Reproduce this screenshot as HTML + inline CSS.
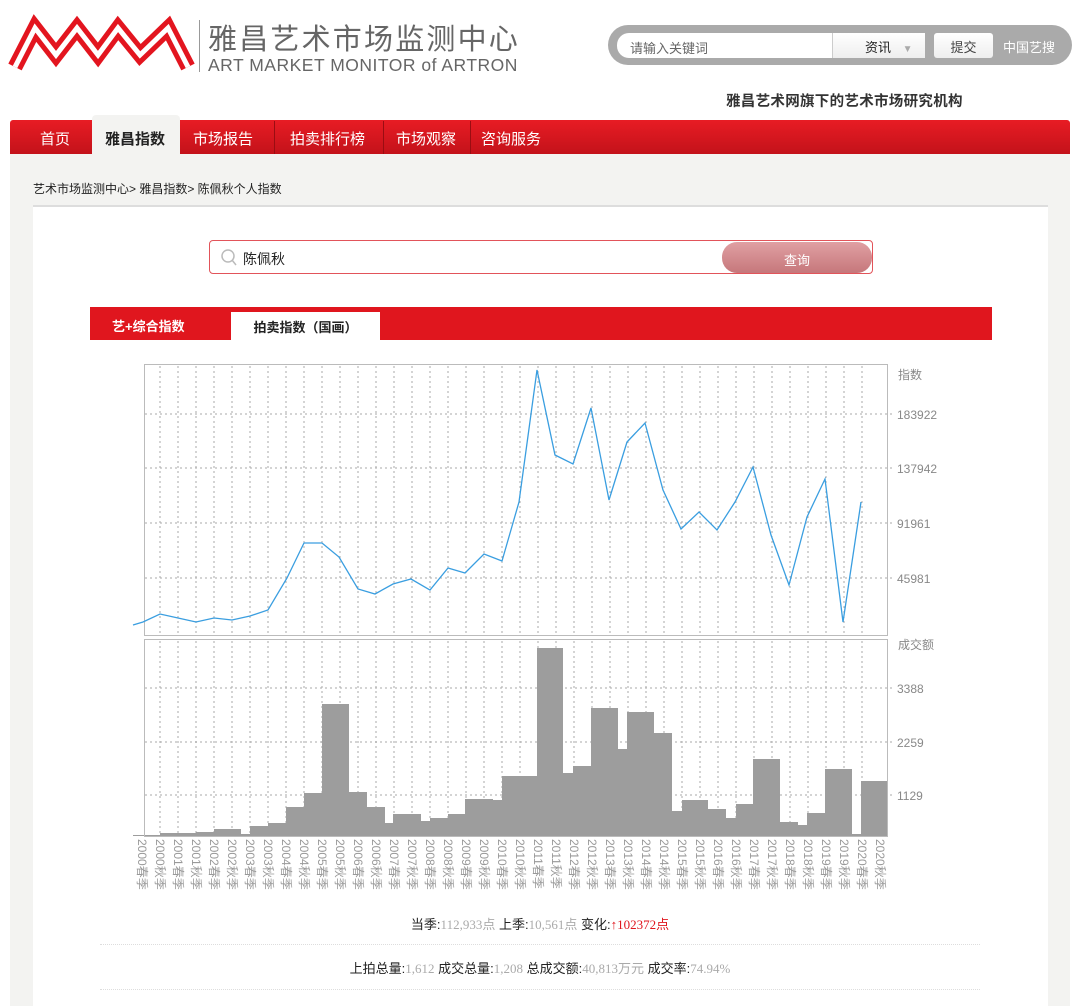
<!DOCTYPE html>
<html><head><meta charset="utf-8"><style>
*{margin:0;padding:0;box-sizing:border-box}
body{width:1080px;height:1006px;overflow:hidden;background:#fff;font-family:"Liberation Sans","Noto Sans CJK SC",sans-serif;position:relative}
.a{position:absolute}
.lb div{writing-mode:vertical-rl;text-orientation:sideways;width:18px}
</style></head><body>
<svg class="a" style="left:0;top:0" width="200" height="85">
<polyline points="15,67 35,28 56,55 77,28 98,55 118,28 140,55 168,28 188,67" fill="none" stroke="#e3151f" stroke-width="15" stroke-linejoin="miter"/>
<polyline points="15,67 35,28 56,55 77,28 98,55 118,28 140,55 168,28 188,67" fill="none" stroke="#fff" stroke-width="5" stroke-linejoin="miter"/>
</svg>
<div class="a" style="left:199px;top:20px;width:1px;height:52px;background:#999"></div>
<div class="a" style="left:208px;top:16px;font-size:29px;color:#666;letter-spacing:2.2px;white-space:nowrap">雅昌艺术市场监测中心</div>
<div class="a" style="left:208px;top:55px;font-size:17.5px;color:#666;white-space:nowrap;letter-spacing:0.5px">ART MARKET MONITOR of ARTRON</div>

<div class="a" style="left:608px;top:25px;width:464px;height:40px;border-radius:20px;background:#aaa"></div>
<div class="a" style="left:617px;top:33px;width:216px;height:25px;border-radius:12px 0 0 12px;background:#fff;font-size:13px;color:#666;padding:5px 0 0 13px">请输入关键词</div>
<div class="a" style="left:832px;top:33px;width:93px;height:25px;background:linear-gradient(#fff,#eee);border-left:1px solid #ccc;font-size:13px;color:#222;padding:4px 0 0 32px">资讯 <span style="color:#aaa;font-size:10px;margin-left:8px">▼</span></div>
<div class="a" style="left:934px;top:33px;width:59px;height:25px;background:linear-gradient(#fff,#eee);border-radius:3px;font-size:13px;color:#444;text-align:center;padding-top:4px">提交</div>
<div class="a" style="left:1003px;top:37px;font-size:13px;color:#fff">中国艺搜</div>
<div class="a" style="left:726px;top:90px;font-size:14.5px;color:#333;font-weight:bold;letter-spacing:0.3px">雅昌艺术网旗下的艺术市场研究机构</div>

<div class="a" style="left:10px;top:153px;width:1060px;height:853px;background:#f3f3f1"></div>
<div class="a" style="left:10px;top:120px;width:1060px;height:34px;background:linear-gradient(#e81c24,#c3121a);border-radius:3px 3px 0 0"></div>
<div class="a" style="left:92px;top:115px;width:88px;height:39px;background:#f3f3f1;border-radius:4px 4px 0 0"></div>
<div class="a" style="left:10px;top:128px;font-size:15px;color:#fff;white-space:nowrap">
<span class="a" style="left:30px">首页</span>
<span class="a" style="left:95px;color:#222;font-weight:bold">雅昌指数</span>
<span class="a" style="left:183px">市场报告</span>
<span class="a" style="left:280px">拍卖排行榜</span>
<span class="a" style="left:386px">市场观察</span>
<span class="a" style="left:471px">咨询服务</span>
</div>
<div class="a" style="left:274px;top:121px;width:1px;height:33px;background:#9a0d12"></div>
<div class="a" style="left:383px;top:121px;width:1px;height:33px;background:#9a0d12"></div>
<div class="a" style="left:470px;top:121px;width:1px;height:33px;background:#9a0d12"></div>

<div class="a" style="left:33px;top:180px;font-size:12px;color:#222">艺术市场监测中心&gt; 雅昌指数&gt; 陈佩秋个人指数</div>
<div class="a" style="left:33px;top:205px;width:1015px;height:801px;background:#fff;border-top:2px solid #ddd"></div>

<div class="a" style="left:209px;top:240px;width:664px;height:34px;border:1px solid #e2545a;border-radius:4px;background:#fff"></div>
<svg class="a" style="left:220px;top:248px" width="20" height="20"><circle cx="8" cy="8" r="6" fill="none" stroke="#bbb" stroke-width="1.5"/><line x1="12" y1="12" x2="16" y2="17" stroke="#bbb" stroke-width="1.5"/></svg>
<div class="a" style="left:243px;top:249px;font-size:14px;color:#222">陈佩秋</div>
<div class="a" style="left:722px;top:242px;width:150px;height:31px;border-radius:15px;background:linear-gradient(#e0a0a3,#c6777b);color:#fff;font-size:13px;text-align:center;padding-top:8px">查询</div>

<div class="a" style="left:90px;top:307px;width:902px;height:33px;background:#e0161e"></div>
<div class="a" style="left:112px;top:316px;font-size:13px;color:#fff;font-weight:bold">艺+综合指数</div>
<div class="a" style="left:231px;top:312px;width:149px;height:28px;background:#fff;font-size:13px;color:#222;font-weight:bold;text-align:center;padding-top:5px">拍卖指数（国画）</div>

<svg class="a" style="left:0;top:0" width="1080" height="1006">
<defs>
<g id="v">
<line x1="160" y1="0" x2="160" y2="268"/><line x1="178" y1="0" x2="178" y2="268"/><line x1="196" y1="0" x2="196" y2="268"/><line x1="214" y1="0" x2="214" y2="268"/><line x1="232" y1="0" x2="232" y2="268"/><line x1="250" y1="0" x2="250" y2="268"/><line x1="268" y1="0" x2="268" y2="268"/><line x1="286" y1="0" x2="286" y2="268"/><line x1="304" y1="0" x2="304" y2="268"/><line x1="322" y1="0" x2="322" y2="268"/><line x1="340" y1="0" x2="340" y2="268"/><line x1="358" y1="0" x2="358" y2="268"/><line x1="376" y1="0" x2="376" y2="268"/><line x1="394" y1="0" x2="394" y2="268"/><line x1="412" y1="0" x2="412" y2="268"/><line x1="430" y1="0" x2="430" y2="268"/><line x1="448" y1="0" x2="448" y2="268"/><line x1="466" y1="0" x2="466" y2="268"/><line x1="484" y1="0" x2="484" y2="268"/><line x1="502" y1="0" x2="502" y2="268"/><line x1="520" y1="0" x2="520" y2="268"/><line x1="538" y1="0" x2="538" y2="268"/><line x1="556" y1="0" x2="556" y2="268"/><line x1="574" y1="0" x2="574" y2="268"/><line x1="592" y1="0" x2="592" y2="268"/><line x1="610" y1="0" x2="610" y2="268"/><line x1="628" y1="0" x2="628" y2="268"/><line x1="646" y1="0" x2="646" y2="268"/><line x1="664" y1="0" x2="664" y2="268"/><line x1="682" y1="0" x2="682" y2="268"/><line x1="700" y1="0" x2="700" y2="268"/><line x1="718" y1="0" x2="718" y2="268"/><line x1="736" y1="0" x2="736" y2="268"/><line x1="754" y1="0" x2="754" y2="268"/><line x1="772" y1="0" x2="772" y2="268"/><line x1="790" y1="0" x2="790" y2="268"/><line x1="808" y1="0" x2="808" y2="268"/><line x1="826" y1="0" x2="826" y2="268"/><line x1="844" y1="0" x2="844" y2="268"/><line x1="862" y1="0" x2="862" y2="268"/>
</g>
<clipPath id="c"><rect x="140" y="641" width="760" height="194"/></clipPath>
</defs>
<g stroke="#aaa" stroke-width="1" stroke-dasharray="2,3" fill="none">
<use href="#v" transform="translate(0,366)"/>
<g clip-path="url(#c)"><use href="#v" transform="translate(0,641)"/></g>
<line x1="145" y1="414" x2="895" y2="414"/><line x1="145" y1="468" x2="895" y2="468"/><line x1="145" y1="523" x2="895" y2="523"/><line x1="145" y1="578" x2="895" y2="578"/>
<line x1="145" y1="688" x2="895" y2="688"/><line x1="145" y1="742" x2="895" y2="742"/><line x1="145" y1="795" x2="895" y2="795"/>
</g>
<path fill="#9d9d9d" d="M133,836 V835 H160 V833 H196 V832 H214 V829 H241 V834 H250 V826 H268 V823 H286 V807 H304 V793 H322 V704 H349 V792 H367 V807 H385 V823 H393 V814 H421 V821 H430 V818 H448 V814 H465 V799 H493 V800 H502 V776 H537 V648 H563 V773 H573 V766 H591 V708 H618 V749 H627 V712 H654 V733 H672 V811 H682 V800 H708 V809 H726 V818 H736 V804 H753 V759 H780 V822 H798 V825 H807 V813 H825 V769 H852 V834 H861 V781 H888 V836 Z"/>
<rect x="144.5" y="364.5" width="743" height="271" fill="none" stroke="#bbb"/>
<rect x="144.5" y="639.5" width="743" height="197" fill="none" stroke="#bbb"/>
<polyline fill="none" stroke="#3a9ee0" stroke-width="1.3" points="133,625 143,622 160,614 178,618 196,622 214,618 232,620 250,616 268,610 287,578 304,543 322,543 339,557 358,589 375,594 393,584 411,579 430,590 448,568 465,573 484,554 502,561 519,502 537,370 555,455 573,464 591,408 609,500 627,442 645,423 663,490 681,529 699,512 717,530 735,502 753,467 771,535 789,585 807,517 825,479 843,622 861,502"/>
<g font-size="12" fill="#888" font-family="Liberation Sans,Noto Sans CJK SC,sans-serif">
<text x="898" y="379">指数</text><text x="897" y="419">183922</text><text x="897" y="473">137942</text><text x="897" y="528">91961</text><text x="897" y="583">45981</text>
<text x="898" y="649">成交额</text><text x="897" y="693">3388</text><text x="897" y="747">2259</text><text x="897" y="800">1129</text>
</g>
</svg>
<div class="a lb" style="left:133px;top:839px;display:flex;font-size:12px;color:#999;line-height:18px">
<div>2000春季</div><div>2000秋季</div><div>2001春季</div><div>2001秋季</div><div>2002春季</div><div>2002秋季</div><div>2003春季</div><div>2003秋季</div><div>2004春季</div><div>2004秋季</div><div>2005春季</div><div>2005秋季</div><div>2006春季</div><div>2006秋季</div><div>2007春季</div><div>2007秋季</div><div>2008春季</div><div>2008秋季</div><div>2009春季</div><div>2009秋季</div><div>2010春季</div><div>2010秋季</div><div>2011春季</div><div>2011秋季</div><div>2012春季</div><div>2012秋季</div><div>2013春季</div><div>2013秋季</div><div>2014春季</div><div>2014秋季</div><div>2015春季</div><div>2015秋季</div><div>2016春季</div><div>2016秋季</div><div>2017春季</div><div>2017秋季</div><div>2018春季</div><div>2018秋季</div><div>2019春季</div><div>2019秋季</div><div>2020春季</div><div>2020秋季</div>
</div>

<div class="a" style="left:0;width:1080px;top:914px;text-align:center;font-size:13px;color:#222">当季:<span style="color:#aaa;font-family:'Liberation Serif',serif">112,933点</span> 上季:<span style="color:#aaa;font-family:'Liberation Serif',serif">10,561点</span> 变化:<span style="color:#e0161e;font-family:'Liberation Serif',serif">↑102372点</span></div>
<div class="a" style="left:100px;top:944px;width:880px;border-top:1px dotted #ddd"></div>
<div class="a" style="left:0;width:1080px;top:958px;text-align:center;font-size:13px;color:#222">上拍总量:<span style="color:#aaa;font-family:'Liberation Serif',serif">1,612</span> 成交总量:<span style="color:#aaa;font-family:'Liberation Serif',serif">1,208</span> 总成交额:<span style="color:#aaa;font-family:'Liberation Serif',serif">40,813万元</span> 成交率:<span style="color:#aaa;font-family:'Liberation Serif',serif">74.94%</span></div>
<div class="a" style="left:100px;top:989px;width:880px;border-top:1px dotted #ddd"></div>
</body></html>
